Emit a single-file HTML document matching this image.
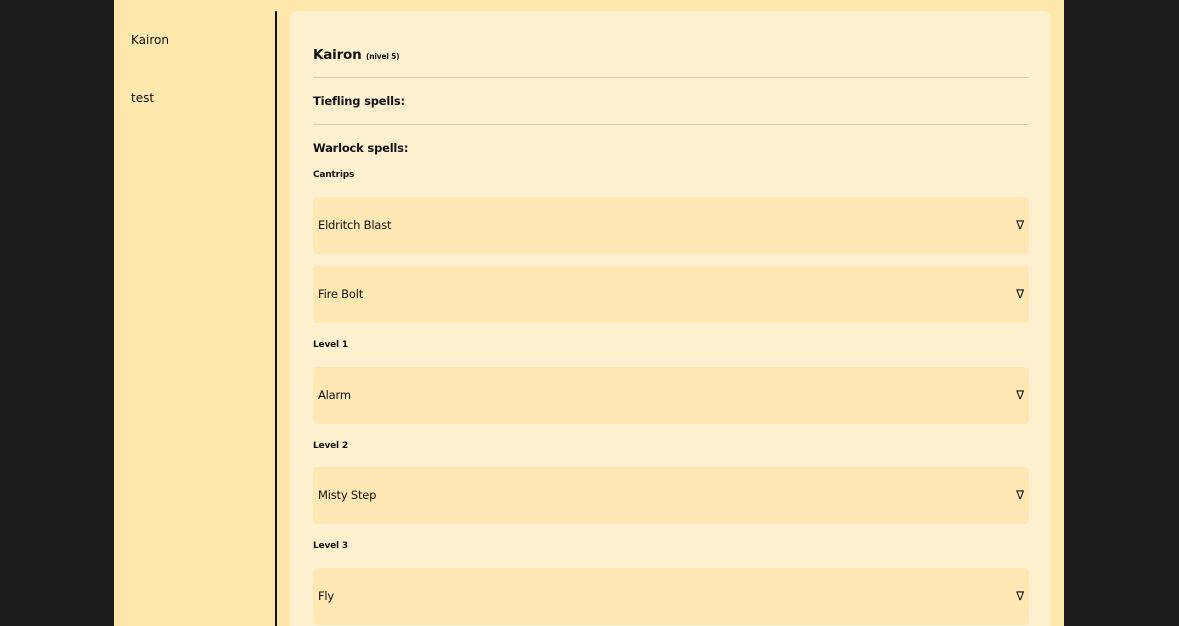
<!DOCTYPE html>
<html><head><style>
html,body{margin:0;width:1179px;height:626px;overflow:hidden}
body{background:#1b1b1b;font-family:"DejaVu Sans","Liberation Sans",sans-serif;color:#111;position:relative}
.c{position:absolute;left:114px;top:0;width:950px;height:626px;background:#ffe8ab}
.line{position:absolute;left:275px;top:11px;width:2px;height:615px;background:#111;border-radius:2px 2px 0 0}
.s{position:absolute;left:131px;font-size:12px}
.main{position:absolute;left:290px;top:11px;width:761px;height:615px;background:#fff1cf;border-radius:8px 8px 0 0}
.t{position:absolute;left:313px;font-weight:bold;white-space:nowrap;letter-spacing:-0.2px}
.hr{position:absolute;left:313px;width:716px;height:1px;background:#d4ccb6}
.it{position:absolute;left:313px;width:716px;height:57px;background:#ffe8b3;border-radius:4px;font-size:11.5px;letter-spacing:-0.2px}
.it span{position:absolute;left:5px;top:21px}
.it b{position:absolute;right:5px;top:21px;font-size:12px;font-weight:normal}
</style></head><body>
<div class="c"></div>
<div class="line"></div>
<div class="s" style="top:33px">Kairon</div>
<div class="s" style="top:91px">test</div>
<div class="main"></div>
<div class="t" style="top:47px;font-size:13.5px">Kairon <span style="font-size:7.5px">(nivel 5)</span></div>
<div class="hr" style="top:77px"></div>
<div class="t" style="top:94px;font-size:11.5px">Tiefling spells:</div>
<div class="hr" style="top:124px"></div>
<div class="t" style="top:141px;font-size:11.5px">Warlock spells:</div>
<div class="t" style="top:170px;font-size:9px">Cantrips</div>
<div class="it" style="top:197px"><span>Eldritch Blast</span><b>∇</b></div>
<div class="it" style="top:266px"><span>Fire Bolt</span><b>∇</b></div>
<div class="t" style="top:340px;font-size:9px">Level 1</div>
<div class="it" style="top:367px"><span>Alarm</span><b>∇</b></div>
<div class="t" style="top:441px;font-size:9px">Level 2</div>
<div class="it" style="top:467px"><span>Misty Step</span><b>∇</b></div>
<div class="t" style="top:541px;font-size:9px">Level 3</div>
<div class="it" style="top:568px"><span>Fly</span><b>∇</b></div>
</body></html>
